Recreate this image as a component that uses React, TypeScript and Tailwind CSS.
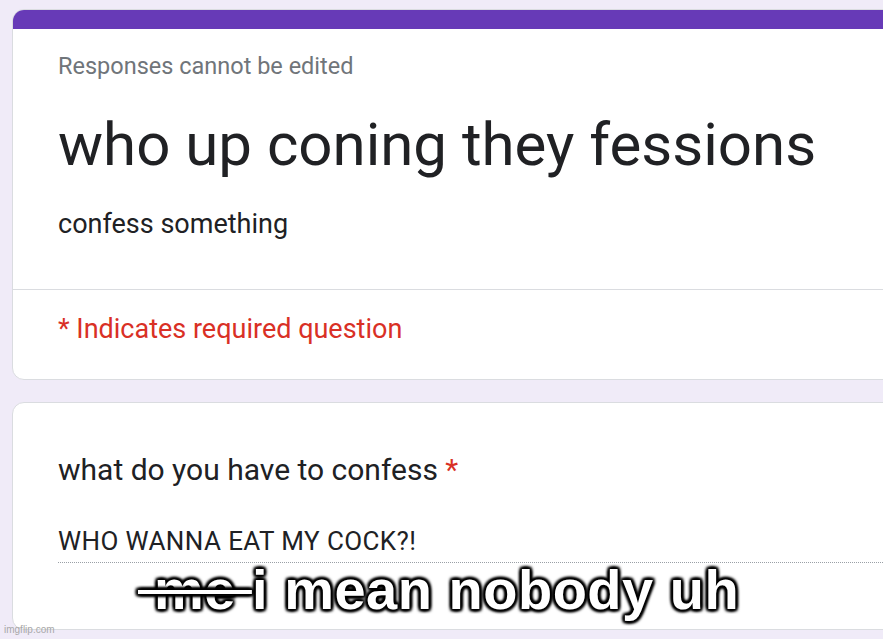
import React from "react";

export default function App() {
  return (
    <div className="relative w-[883px] h-[639px] overflow-hidden bg-[#f0ebf8]" style={{ fontFamily: "Roboto, 'Liberation Sans', sans-serif" }}>
      <div className="pl-[12px] pt-[9px] flex flex-col gap-[22px]">
        <div className="w-[900px] h-[371px] rounded-[12px] bg-white border border-[#dadce0] overflow-hidden flex flex-col">
          <div className="h-[19px] bg-[#673ab7] shrink-0" />
          <div className="pl-[45px] pt-[22px] h-[260px] shrink-0">
            <div className="text-[23.5px] leading-[30px] text-[#70757a]">Responses cannot be edited</div>
            <div className="mt-[28px] text-[60px] leading-[72px] text-[#202124]">who up coning they fessions</div>
            <div className="mt-[25px] text-[27px] leading-[36px] text-[#202124]">confess something</div>
          </div>
          <div className="h-px bg-[#dadce0] shrink-0" />
          <div className="pl-[45px] pt-[21px] text-[27px] leading-[36px] text-[#d93025]">* Indicates required question</div>
        </div>
        <div className="w-[900px] h-[228px] rounded-[12px] bg-white border border-[#dadce0] pl-[45px] pt-[48px]">
          <div className="text-[30px] leading-[38px] text-[#202124]">
            what do you have to confess <span className="text-[#d93025]">*</span>
          </div>
          <div className="mt-[36px] text-[26px] leading-[32px] text-[#202124] tracking-[0.4px]">WHO WANNA EAT MY COCK?!</div>
          <div className="mt-[5px] border-b border-dotted border-[#9aa0a6]" />
        </div>
      </div>

      <div
        className="absolute left-[138px] top-[556px] text-[56px] leading-[68px] font-bold tracking-[0.5px] text-white whitespace-pre"
        style={{
          fontFamily: "'Liberation Sans', Arial, sans-serif",
          textShadow:
            "2px 2px 3px #000, -2px -2px 3px #000, 2px -2px 3px #000, -2px 2px 3px #000, 0 2px 3px #000, 0 -2px 3px #000, 2px 0 3px #000, -2px 0 3px #000",
        }}
      >
        <span className="line-through decoration-[4px]">{" me "}</span>i mean nobody uh
      </div>

      <div className="absolute left-[4px] top-[624px] text-[10px] leading-[12px] text-[#a8a8a8]" style={{ fontFamily: "'Liberation Sans', Arial, sans-serif" }}>
        imgflip.com
      </div>
    </div>
  );
}
